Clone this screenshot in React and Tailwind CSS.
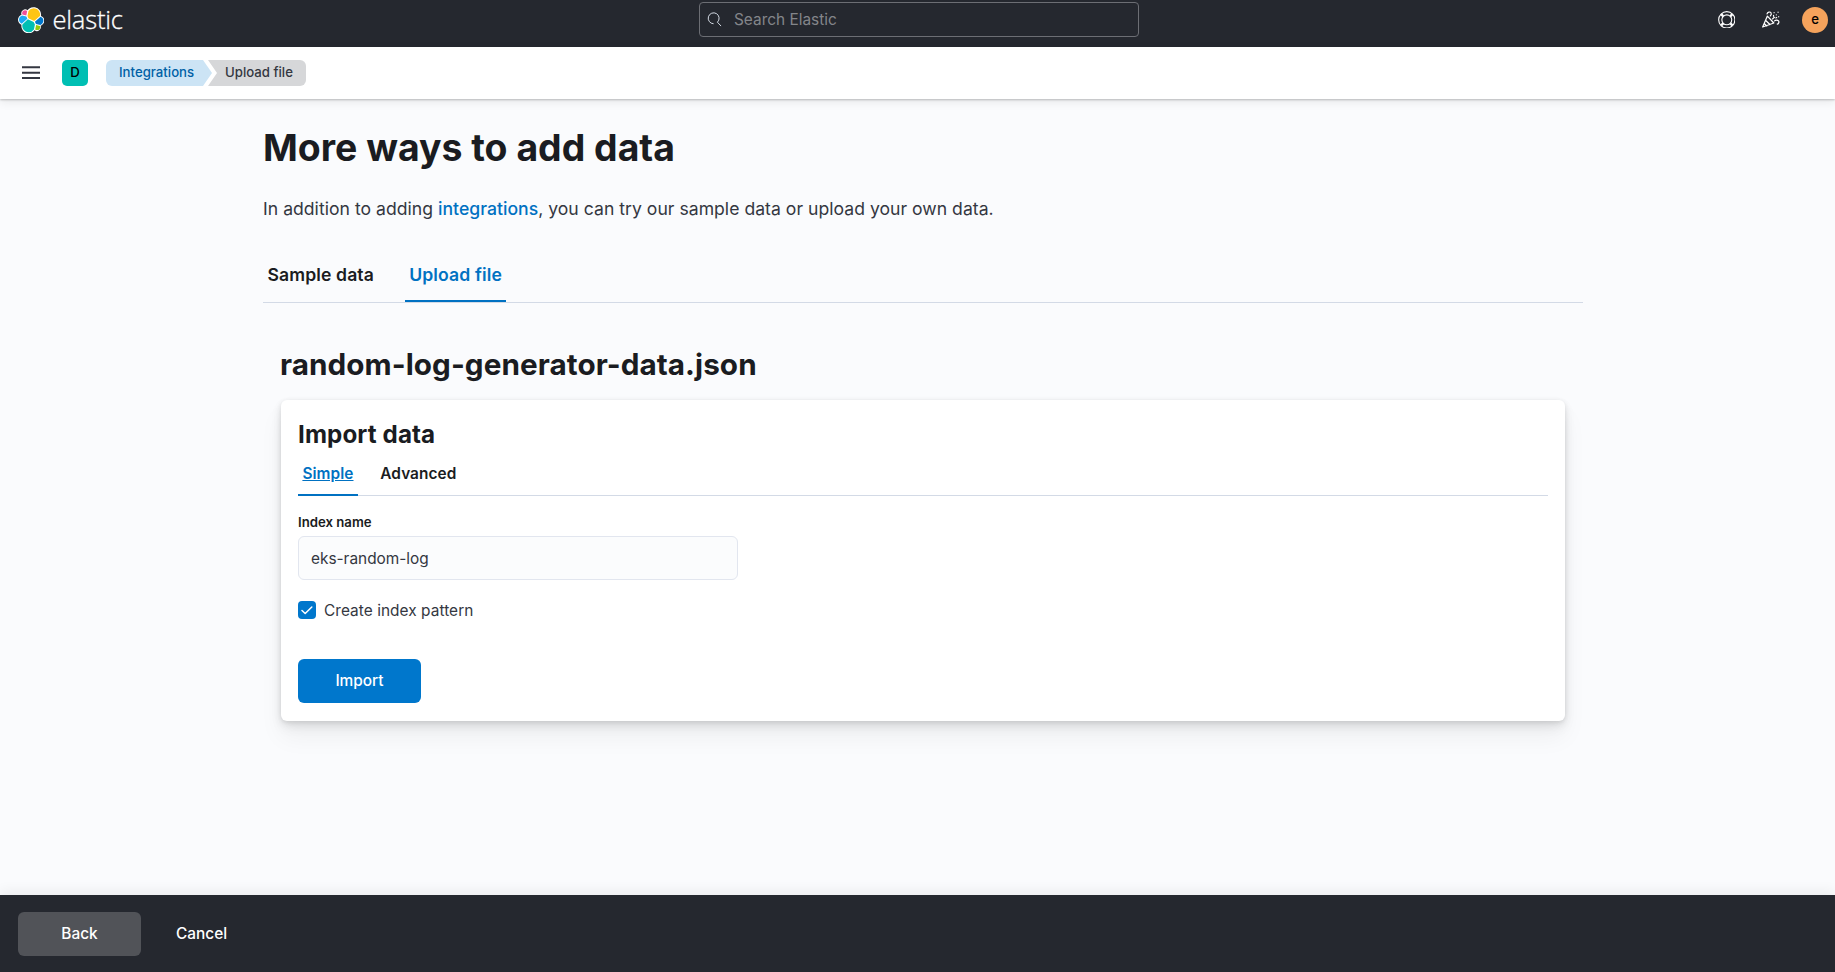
function ElasticMark() {
  return (
    <svg viewBox="0 0 32 32" className="size-[26.4px]">
      <path fill="#fff" d="M32 16.77a6.334 6.334 0 0 0-1.14-3.63 6.269 6.269 0 0 0-3.02-2.3 9.054 9.054 0 0 0-1.55-6.84 8.9 8.9 0 0 0-5.8-3.6 8.85 8.85 0 0 0-6.66 1.34 8.9 8.9 0 0 0-2.18 2.2 4.68 4.68 0 0 0-5.72-.04 4.85 4.85 0 0 0-1.67 5.53 6.38 6.38 0 0 0-3.09 2.35A6.42 6.42 0 0 0 0 15.43a6.36 6.36 0 0 0 1.15 3.65 6.28 6.28 0 0 0 3.04 2.3 9.2 9.2 0 0 0-.15 1.62 8.96 8.96 0 0 0 1.69 5.25 8.82 8.82 0 0 0 4.43 3.25 8.75 8.75 0 0 0 5.47 0 8.9 8.9 0 0 0 4.4-3.3 4.68 4.68 0 0 0 5.7.05 4.8 4.8 0 0 0 1.68-5.54 6.37 6.37 0 0 0 3.09-2.34A6.42 6.42 0 0 0 32 16.77z" />
      <path fill="#FEC514" d="M12.58 13.787l7.002 3.211 7.066-6.213a7.849 7.849 0 0 0 .152-1.557c0-4.287-3.464-7.775-7.723-7.775a7.7 7.7 0 0 0-6.365 3.365l-1.173 6.11 1.041 2.859z" />
      <path fill="#00BFB3" d="M5.333 21.214a7.906 7.906 0 0 0-.151 1.583c0 4.3 3.481 7.796 7.76 7.796a7.73 7.73 0 0 0 6.406-3.393l1.162-6.08-1.552-2.987-7.02-3.214-6.605 6.295z" />
      <path fill="#F04E98" d="M5.29 9.08l4.79 1.14 1.05-5.467a3.798 3.798 0 0 0-2.303-.775 3.785 3.785 0 0 0-3.771 3.794c0 .44.081.88.23 1.307z" />
      <path fill="#1BA9F5" d="M4.874 10.226c-2.141.714-3.638 2.78-3.638 5.059a5.297 5.297 0 0 0 3.397 4.953l6.722-6.108-1.234-2.656-5.247-1.248z" />
      <path fill="#93C90E" d="M20.874 27.239a3.76 3.76 0 0 0 2.296.784 3.785 3.785 0 0 0 3.771-3.794c0-.464-.081-.904-.23-1.319l-4.786-1.126-1.051 5.455z" />
      <path fill="#07C" d="M21.848 20.525l5.27 1.241c2.142-.713 3.64-2.78 3.64-5.06a5.289 5.289 0 0 0-3.406-4.942l-6.891 6.06 1.387 2.701z" />
    </svg>
  );
}

function SearchIcon() {
  return (
    <svg viewBox="0 0 16 16" className="size-[15px] shrink-0" fill="none" stroke="#dfe5ef" strokeWidth="1">
      <path d="M7 12.5A5.8 5.8 0 1 1 11.1 10.9L15 15" />
    </svg>
  );
}

function HelpIcon() {
  return (
    <svg viewBox="0 0 16 16" className="size-[17.6px]" fill="none" stroke="#fff">
      <circle cx="8" cy="8" r="7.4" />
      <circle cx="8" cy="8" r="4.5" />
      <path strokeWidth="2.2" d="M2.9 2.9l1.9 1.9M13.1 2.9l-1.9 1.9M2.9 13.1l1.9-1.9M13.1 13.1l-1.9-1.9" />
    </svg>
  );
}

function CheerIcon() {
  return (
    <svg viewBox="0 0 16 16" className="size-[17.6px]" fill="none" stroke="#fff" strokeWidth="1.1" strokeLinecap="round" strokeLinejoin="round">
      <path d="M4.9 4.6L.6 14.6l10.2-3.7zM3.4 8.6l3.8 3.7M2.1 11.4l2.2 2.2M6.8 6.4l3.6 4.3" />
      <path d="M4.6 2.6C5 .9 7.4.4 8.2 1.6c.6 1 .2 2-.6 2.9M9.5 7.2l1.8-1.5M11.4 9c1-.9 2.8-1 3.600-.1.8 1 .2 2.700-1.100 3.100" />
      <path d="M11 1.4v.1M14.6 1.1v.1M13 3.4v.1M15.2 5.2v.1M12.6 6.3l.7-.4M10.5 4v.8" />
    </svg>
  );
}

function MenuIcon() {
  return (
    <svg viewBox="0 0 18 14" className="h-[14px] w-[18px]" fill="#343741">
      <path d="M0 .2h18v2H0zM0 5.700h18v2H0zM0 11.100h18v2H0z" />
    </svg>
  );
}

function Breadcrumbs() {
  return (
    <nav className="ml-[18px] flex h-[26px] text-[13.2px] font-medium leading-[25px]">
      <a className="w-[106px] rounded-l-[6px] bg-[#cce4f5] pl-[13px] text-[#0061a6] [clip-path:polygon(0_0,97px_0,100%_50%,97px_100%,0_100%)]">
        Integrations
      </a>
      <span className="-ml-[4px] w-[98px] rounded-r-[6px] bg-[#d6d7d9] pl-[17px] text-[#343741] [clip-path:polygon(0_0,100%_0,100%_100%,0_100%,9px_50%)]">
        Upload file
      </span>
    </nav>
  );
}

export default function App() {
  return (
    <div className="flex h-[972px] w-[1835px] flex-col overflow-hidden bg-[#fafbfd] font-['Inter',sans-serif] text-[15.4px] text-[#343741]">
      <header className="flex h-[47px] shrink-0 items-start bg-[#25282f] pl-[18px] pr-[7px]">
        <div className="flex h-[40px] w-[681px] items-center">
          <ElasticMark />
          <span className="ml-[8px] font-['Open_Sans',sans-serif] text-[25.6px] font-light leading-[26px] tracking-[-0.2px] text-white [-webkit-text-stroke:0.3px_white]">
            elastic
          </span>
        </div>
        <div className="mt-[2px] flex h-[35px] w-[440px] items-center gap-[12px] rounded-[4px] border border-[#6c6e74] pl-[7px] leading-[20px] text-[#83858a]">
          <SearchIcon />
          <span>Search Elastic</span>
        </div>
        <div className="flex h-[39px] grow items-center justify-end">
          <HelpIcon />
          <span className="ml-[27px] flex">
            <CheerIcon />
          </span>
          <span className="ml-[22px] mt-px flex size-[26px] items-center justify-center rounded-full bg-[#f5a35c] text-[13.2px] font-medium text-black">
            e
          </span>
        </div>
      </header>

      <div className="relative z-10 flex h-[52px] shrink-0 items-center bg-white pl-[22px] shadow-[0_1px_2px_rgba(0,0,0,0.22),0_3px_9px_rgba(0,0,0,0.08)]">
        <MenuIcon />
        <span className="ml-[22px] flex size-[26px] items-center justify-center rounded-[5px] bg-[#00bfb3] text-[13.2px] font-medium text-black">
          D
        </span>
        <Breadcrumbs />
      </div>

      <main className="mx-[263px] w-[1320px] grow">
        <h1 className="mt-[27px] text-[37.4px] font-bold leading-[44px] text-[#1a1c21]">More ways to add data</h1>
        <p className="mt-[25px] text-[17.6px] leading-[28px] tracking-[0.02px]">
          In addition to adding <a className="font-medium text-[#0071c2]">integrations</a>, you can try our sample data or
          upload your own data.
        </p>
        <div className="mt-[26px] flex h-[54px] gap-[26.4px] border-b border-[#d3dae6] text-[17.6px] font-semibold leading-[52px] tracking-[0.12px] text-[#1a1c21]">
          <span className="px-[4.4px]">Sample data</span>
          <span className="h-[53px] border-b-2 border-[#0071c2] px-[4.4px] text-[#0071c2]">Upload file</span>
        </div>

        <section className="px-[18px]">
          <h2 className="-ml-px mt-[43px] text-[29.7px] font-bold leading-[36px] tracking-[0.06px] text-[#1a1c21]">
            random-log-generator-data.json
          </h2>
          <div className="mt-[18px] h-[321px] rounded-[6px] bg-white px-[17px] pt-[20px] shadow-[0_1px_4px_rgba(0,0,0,0.08),0_3px_8px_rgba(0,0,0,0.07),0_6px_13px_rgba(0,0,0,0.06),0_16px_25px_rgba(0,0,0,0.05)]">
            <h3 className="text-[24.2px] font-bold leading-[30px] tracking-[0.1px] text-[#1a1c21]">Import data</h3>
            <div className="mt-[2px] flex h-[44px] gap-[18px] border-b border-[#d3dae6] font-semibold leading-[44px] tracking-[0.08px] text-[#1a1c21]">
              <span className="h-[44px] border-b-2 border-[#0071c2] px-[4.4px] text-[#0071c2] underline">Simple</span>
              <span className="px-[4.4px]">Advanced</span>
            </div>
            <div className="mt-[17px] text-[13.2px] font-semibold leading-[18px] text-[#1a1c21]">Index name</div>
            <div className="mt-[5px] flex h-[44px] w-[440px] items-center rounded-[6px] border border-[#e2e6ef] bg-[#fbfcfd] pl-[12px] pt-px">
              eks-random-log
            </div>
            <div className="mt-[18px] flex h-[24px] items-center gap-[8px]">
              <span className="flex size-[18px] items-center justify-center rounded-[4px] bg-[#07c]">
                <svg viewBox="0 0 12 9" className="h-[9px] w-[12px]" fill="none" stroke="#fff" strokeWidth="1.5" strokeLinecap="round" strokeLinejoin="round">
                  <path d="M1 4.5l3.2 3L10.8 1" />
                </svg>
              </span>
              <span className="pt-[2px] tracking-[0.06px]">Create index pattern</span>
            </div>
            <button className="mt-[37px] block h-[44px] w-[123px] rounded-[6px] bg-[#07c] font-medium text-white">
              Import
            </button>
          </div>
        </section>
      </main>

      <footer className="flex h-[77px] shrink-0 items-start bg-[#25282f] pl-[18px] pt-[17px] font-medium text-white shadow-[0_-4px_12px_rgba(0,0,0,0.06)]">
        <button className="h-[44px] w-[123px] rounded-[6px] bg-[#515358]">Back</button>
        <button className="ml-[35px] h-[44px]">Cancel</button>
      </footer>
    </div>
  );
}
